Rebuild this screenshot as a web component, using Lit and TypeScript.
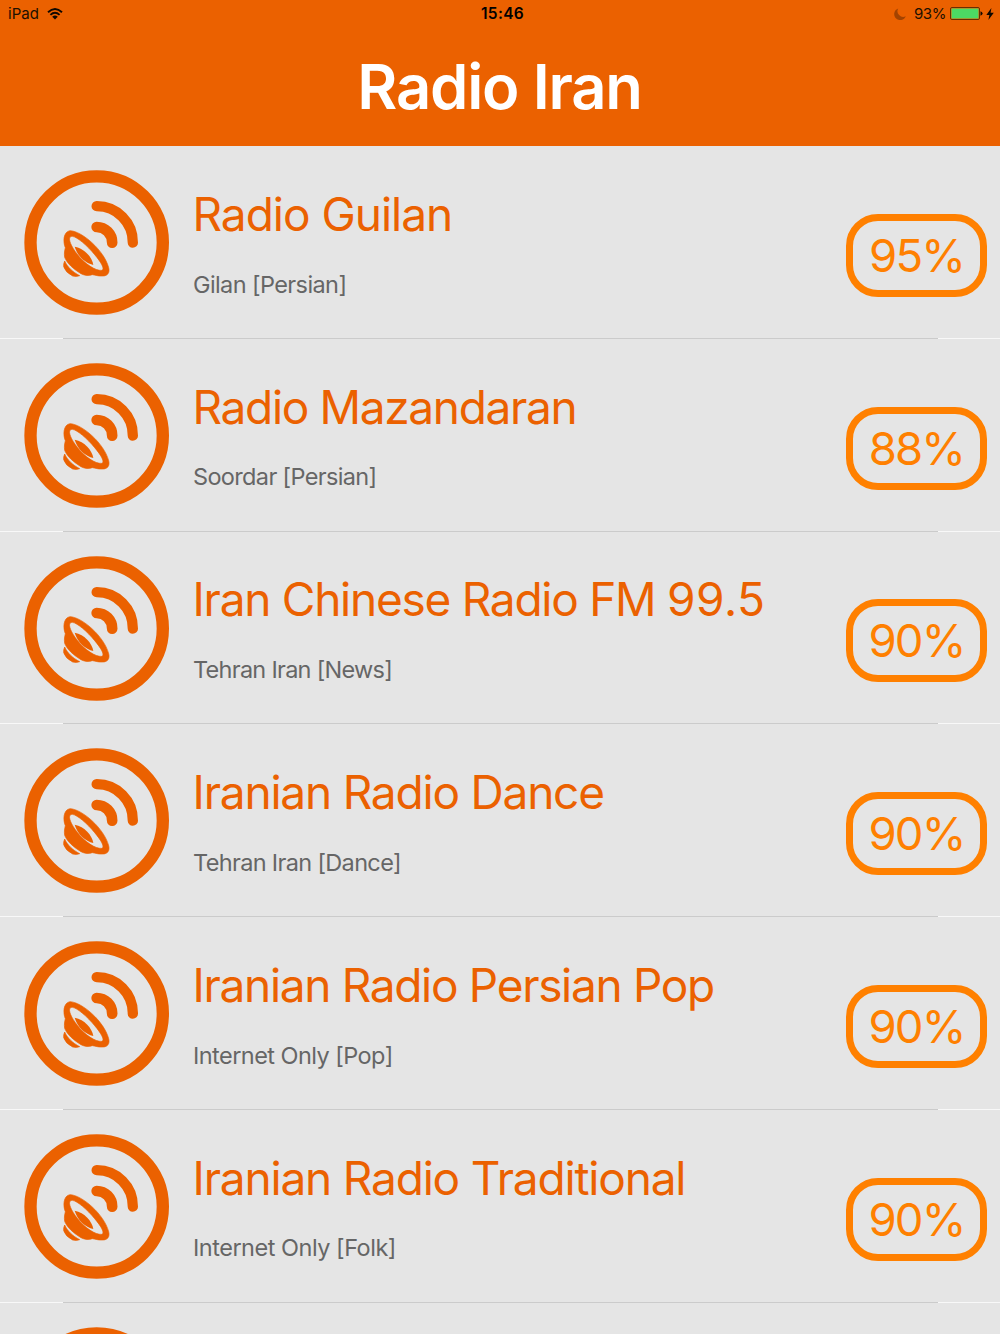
import { LitElement, html, css, svg } from "lit";
import { customElement, property } from "lit/decorators.js";

interface Station { name: string; digits?: string; info: string; score: string; nameSpacing: number; infoSpacing: number; }

const stations: Station[] = [
  { name: "Radio Guilan", info: "Gilan [Persian]", score: "95%", nameSpacing: -1.02, infoSpacing: -0.6 },
  { name: "Radio Mazandaran", info: "Soordar [Persian]", score: "88%", nameSpacing: -1.33, infoSpacing: -0.65 },
  { name: "Iran Chinese Radio FM ", digits: "99.5", info: "Tehran Iran [News]", score: "90%", nameSpacing: -1.26, infoSpacing: -0.72 },
  { name: "Iranian Radio Dance", info: "Tehran Iran [Dance]", score: "90%", nameSpacing: -1.2, infoSpacing: -0.66 },
  { name: "Iranian Radio Persian Pop", info: "Internet Only [Pop]", score: "90%", nameSpacing: -1.32, infoSpacing: -0.55 },
  { name: "Iranian Radio Traditional", info: "Internet Only [Folk]", score: "90%", nameSpacing: -1.18, infoSpacing: -0.49 },
  { name: "", info: "", score: "", nameSpacing: 0, infoSpacing: 0 },
];

const dish = svg`
  <circle cx="245" cy="247.5" r="198.5" fill="none" stroke="#eb6100" stroke-width="37"/>
  <path d="M245 138.500 A108 108 0 0 1 353.500 248" fill="none" stroke="#eb6100" stroke-width="31" stroke-linecap="round"/>
  <path d="M245 201 A46.500 46.500 0 0 1 291.500 248" fill="none" stroke="#eb6100" stroke-width="32" stroke-linecap="round"/>
  <path fill="#eb6100" stroke="#eb6100" stroke-width="2" fill-rule="evenodd" d="M165 212 C200 213 267 270 281 323 C285 339 277 348 263 348 C250 349 240 345 232 344 C222 348 209 347 198 341 C175 327 156 310 149 292 C147 279 149 272 151 263 C144 247 144 215 165 212Z M172 229 C156 228 164 254 187 283 C210 313 243 333 260 331 C270 329 261 310 239 284 C217 257 187 231 172 229Z"/>
  <path fill="#eb6100" d="M179 260 C209 266 231 291 235 315 C211 309 188 290 179 260Z"/>
  <path fill="#eb6100" stroke="#eb6100" stroke-width="2" d="M149 303 C157 321 173 336 194 347 Q184 351 173 348 Q151 337 146 320 Q145 311 149 303Z"/>`;

@customElement("station-row")
export class StationRow extends LitElement {
  @property({ attribute: false }) station!: Station;
  static styles = css`
    :host { display: flex; box-sizing: border-box; height: 192.75px; padding: 14px 13px 0 15px; align-items: flex-start; background: linear-gradient(90deg, #f8f8f8 63px, #cbcbcb 63px 938px, #f8f8f8 938px) bottom / 100% 1px no-repeat; }
    .icon { width: 165px; height: 165px; flex: none; }
    .text { flex: 1; padding: 25.8px 0 0 12.5px; white-space: nowrap; }
    .name { font-size: 46px; line-height: 56px; color: #eb6100; }
    .digits { letter-spacing: 0.5px; }
    .info { font-size: 23.5px; line-height: 30px; margin-top: 27.8px; padding-left: 0.5px; color: #666; }
    .badge { box-sizing: border-box; width: 141px; height: 83px; margin-top: 53.8px; border: 7.5px solid #ff8000; border-radius: 32px; display: flex; align-items: center; justify-content: center; font-size: 45.5px; font-weight: 380; letter-spacing: -1.9px; color: #ff8000; }
  `;
  render() {
    const s = this.station;
    return html`
      <svg class="icon" viewBox="0 0 495 495">${dish}</svg>
      <div class="text">
        <div class="name"><span style="letter-spacing:${s.nameSpacing}px">${s.name}</span>${s.digits ? html`<span class="digits">${s.digits}</span>` : ""}</div>
        <div class="info"><span style="letter-spacing:${s.infoSpacing}px">${s.info}</span></div>
      </div>
      ${s.score ? html`<div class="badge"><span>${s.score}</span></div>` : ""}`;
  }
}

@customElement("app-root")
export class AppRoot extends LitElement {
  static styles = css`
    :host { display: block; height: 1334px; overflow: hidden; background: #e5e5e5; font-family: Inter, "Liberation Sans", sans-serif; }
    header { height: 146px; background: #eb6100; }
    .status { display: grid; grid-template-columns: 1fr auto 1fr; height: 27px; align-items: center; font-size: 15px; padding: 0 6px 0 8px; color: #201000; }
    .left, .right { display: flex; align-items: center; }
    .right { justify-content: flex-end; }
    .wifi { width: 16px; height: 12px; margin-left: 8px; }
    .moon { width: 12px; height: 12px; margin-right: 8px; }
    .battery { width: 33px; height: 13px; margin: 0 3px 0 4px; }
    .percent { letter-spacing: -0.4px; }
    .bolt { width: 8px; height: 12px; }
    .time { font-weight: 600; font-size: 15.5px; letter-spacing: 0.3px; color: #000; padding-left: 3px; }
    h1 { margin: 0; text-align: center; color: #fff; font-size: 61.5px; font-weight: 600; line-height: 119px; letter-spacing: -1.2px; padding-right: 1px; }
  `;
  render() {
    return html`
      <header>
        <div class="status">
          <div class="left">
            <span>iPad</span>
            <svg class="wifi" viewBox="0 0 16 12">
              <path d="M1 4.300 Q8 -2.300 15 4.300 M3.400 6.900 Q8 2.700 12.600 6.900" fill="none" stroke="#100800" stroke-width="1.900"/>
              <path d="M5.200 8.700 Q8 6.300 10.800 8.700 L8 11.500Z" fill="#100800"/>
            </svg>
          </div>
          <span class="time">15:46</span>
          <div class="right">
            <svg class="moon" viewBox="0 0 12 12"><path d="M4.200 .4 A6 6 0 1 0 11.800 8.200 A5.700 5.700 0 0 1 4.200 .4Z" fill="#a34300"/></svg>
            <span class="percent">93%</span>
            <svg class="battery" viewBox="0 0 33 13">
              <rect x=".5" y=".5" width="29" height="12" rx="1.500" fill="none" stroke="#6b2c00"/>
              <rect x="1.500" y="1.500" width="27" height="10" fill="#4cd964"/>
              <path d="M30.500 4.300 Q32.600 5 32.600 6.500 Q32.600 8 30.500 8.700Z" fill="#100800"/>
            </svg>
            <svg class="bolt" viewBox="0 0 8 12"><path d="M5.400 0 L.3 6.900 H3.400 L2.400 12 L7.800 4.800 H4.600Z" fill="#100800"/></svg>
          </div>
        </div>
        <h1><span>Radio Iran</span></h1>
      </header>
      <main>${stations.map((s) => html`<station-row .station=${s}></station-row>`)}</main>`;
  }
}
